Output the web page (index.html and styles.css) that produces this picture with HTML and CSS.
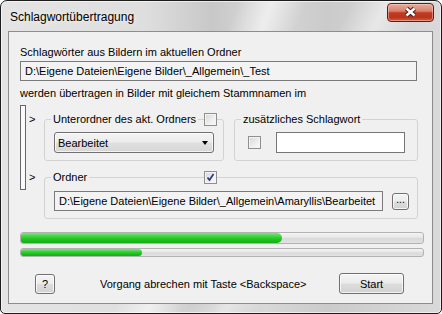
FILE: index.html
```html
<!DOCTYPE html>
<html lang="de">
<head>
<meta charset="utf-8">
<title>Schlagwortübertragung</title>
<link rel="stylesheet" href="styles.css">
</head>
<body>
<div class="window">
  <div class="titlebar">
    <span class="title">Schlagwortübertragung</span>
    <div class="close">
      <svg width="47" height="19" viewBox="0 0 47 19">
        <path d="M19.5 5.5 L27.5 12.5 M27.5 5.5 L19.5 12.5" stroke="#4a2018" stroke-width="4.6" fill="none"/>
        <path d="M19.5 5.5 L27.5 12.5 M27.5 5.5 L19.5 12.5" stroke="#ffffff" stroke-width="2.4" fill="none"/>
      </svg>
    </div>
  </div>
  <div class="client">
    <div class="label">Schlagwörter aus Bildern im aktuellen Ordner</div>
    <div class="field path1">D:\Eigene Dateien\Eigene Bilder\_Allgemein\_Test</div>
    <div class="label l2">werden übertragen in Bilder mit gleichem Stammnamen im</div>
    <div class="options">
      <div class="bracket"></div>
      <div class="rows">
        <div class="row">
          <span class="arrow">&gt;</span>
          <fieldset class="group g1">
            <legend>Unterordner des akt. Ordners</legend>
            <span class="check over"></span>
            <div class="combo"><span>Bearbeitet</span><span class="caret"></span></div>
          </fieldset>
          <fieldset class="group g2">
            <legend>zusätzliches Schlagwort</legend>
            <div class="g2row">
              <span class="check"></span>
              <div class="input"></div>
            </div>
          </fieldset>
        </div>
        <div class="row r2">
          <span class="arrow">&gt;</span>
          <fieldset class="group g3">
            <legend>Ordner</legend>
            <span class="check over checked">
              <svg width="11" height="11" viewBox="0 0 11 11"><path d="M2.5 5.5 L4.5 8 L8.5 2" stroke="#283c86" stroke-width="1.7" fill="none"/></svg>
            </span>
            <div class="g3row">
              <div class="field path2">D:\Eigene Dateien\Eigene Bilder\_Allgemein\Amaryllis\Bearbeitet</div>
              <div class="btn dots">...</div>
            </div>
          </fieldset>
        </div>
      </div>
    </div>
    <div class="progress p1"><div class="fill" style="width:65%"></div></div>
    <div class="progress p2"><div class="fill" style="width:30%"></div></div>
    <div class="bottom">
      <div class="btn help">?</div>
      <span class="hint">Vorgang abrechen mit Taste &lt;Backspace&gt;</span>
      <div class="btn start">Start</div>
    </div>
  </div>
</div>
</body>
</html>
```

FILE: styles.css
```css
* { box-sizing: border-box; }
html, body { margin: 0; padding: 0; }
body {
  width: 442px;
  height: 314px;
  overflow: hidden;
  background: #ffffff;
  font-family: "Liberation Sans", Arial, sans-serif;
  font-size: 11px;
  color: #000;
}
.window {
  width: 442px;
  height: 314px;
  border: 1px solid #1c1c1c;
  border-radius: 7px 7px 5px 5px;
  display: flex;
  flex-direction: column;
  box-shadow: inset 0 0 0 1px rgba(255,255,255,0.6);
  background:
    linear-gradient(112deg, transparent 42%, rgba(255,255,255,0.55) 48%, transparent 54%),
    linear-gradient(118deg, transparent 58%, rgba(255,255,255,0.5) 64%, transparent 70%),
    linear-gradient(to right, #e4e4e4 0%, #dedede 33%, #c8c8c8 48%, #d8d8d8 60%, #cbcbcb 74%, #d9d9d9 100%);
}
.titlebar {
  height: 30px;
  flex: none;
  display: flex;
  align-items: flex-start;
}
.title {
  font-size: 12px;
  line-height: 14px;
  margin: 9px 0 0 9px;
  color: #000;
  text-shadow: 0 0 6px rgba(255,255,255,0.9);
}
.close {
  margin: 2px 7px 0 auto;
  width: 47px;
  height: 19px;
  border: 1px solid #5c1d12;
  border-radius: 4px;
  background: linear-gradient(#e9ac9d 0%, #da806c 42%, #c23b22 52%, #bb331a 78%, #cf5e47 100%);
  box-shadow: inset 0 0 0 1px rgba(255,220,210,0.45);
  display: flex;
}
.close svg { display: block; margin: -1px; }
.client {
  flex: 1;
  margin: 0 8px 9px 7px;
  border: 1px solid #8d8d8d;
  background: #f0f0f0;
  padding: 14px 8px 0 11px;
  display: flex;
  flex-direction: column;
}
.label { line-height: 13px; height: 13px; white-space: nowrap; }
.l2 { margin-top: 6px; }
.field {
  border: 1px solid #7a7a7a;
  background: #f3f3f3;
  height: 20px;
  line-height: 18px;
  padding-left: 4px;
  white-space: nowrap;
}
.path1 { width: 397px; margin-top: 2px; }
.options { display: flex; margin-top: 5px; }
.bracket {
  width: 6px;
  height: 85px;
  border: 1px solid #676767;
  background: #fafafa;
}
.rows { margin: 8px 0 0 3px; display: flex; flex-direction: column; }
.row { display: flex; align-items: stretch; }
.r2 { margin-top: 10px; }
.arrow { width: 15px; line-height: 13px; height: 13px; }
.group {
  position: relative;
  margin: 0;
  padding: 0 8px 7px 6px;
  border: 1px solid #d3d3d3;
  border-radius: 3px;
  min-width: 0;
}
.group legend {
  padding: 0 2px;
  line-height: 13px;
  height: 13px;
  white-space: nowrap;
}
.g1 { width: 180px; }
.g2 { width: 184px; margin-left: 10px; }
.g3 { width: 374px; }
.check {
  display: block;
  width: 13px;
  height: 13px;
  border: 1px solid #8f8f8f;
  background: linear-gradient(135deg, #d6d6d6 0%, #efefef 60%, #fbfbfb 100%);
  box-shadow: inset 0 0 0 1px #f4f4f4;
  flex: none;
}
.check svg { display: block; margin: 0; }
.over { position: absolute; top: -13px; left: 159px; }
.combo {
  margin: 6px 0 0 3px;
  width: 160px;
  height: 21px;
  border: 1px solid #707070;
  border-radius: 3px;
  background: linear-gradient(#f4f4f4 0%, #ececec 48%, #e0e0e0 52%, #d6d6d6 100%);
  box-shadow: inset 0 0 0 1px rgba(255,255,255,0.7);
  display: flex;
  align-items: center;
  justify-content: space-between;
  padding: 0 5px 0 3px;
}
.caret {
  width: 0;
  height: 0;
  border-top: 4px solid #000;
  border-left: 3.5px solid transparent;
  border-right: 3.5px solid transparent;
}
.g2row { display: flex; align-items: center; margin: 6px 0 0 7px; height: 21px; }
.input {
  margin-left: 15px;
  width: 129px;
  height: 21px;
  border: 1px solid #767676;
  background: #ffffff;
}
.g3row { display: flex; align-items: center; margin: 7px 0 0 3px; }
.path2 { width: 329px; }
.btn {
  border: 1px solid #707070;
  border-radius: 3px;
  background: linear-gradient(#f4f4f4 0%, #ececec 48%, #dddddd 52%, #d2d2d2 100%);
  box-shadow: inset 0 0 0 1px rgba(255,255,255,0.75);
  display: flex;
  align-items: center;
  justify-content: center;
  flex: none;
}
.dots { width: 17px; height: 17px; margin-left: 9px; line-height: 10px; align-items: flex-end; padding-bottom: 4px; font-size: 10px; }
.progress {
  width: 404px;
  border: 1px solid #b2b2b2;
  border-radius: 3px;
  background: linear-gradient(#f5f5f5 0%, #e6e6e6 45%, #d9d9d9 55%, #e2e2e2 100%);
  overflow: hidden;
}
.p1 { height: 12px; margin-top: 13px; }
.p2 { height: 9px; margin-top: 4px; }
.fill {
  height: 100%;
  background: linear-gradient(#7ee27e 0%, #3fd43f 35%, #22c422 60%, #12b012 100%);
  border-radius: 2px 6px 6px 2px;
}
.bottom { display: flex; align-items: center; margin-top: 16px; height: 21px; }
.help { width: 20px; height: 20px; margin-left: 15px; }
.hint { margin-left: 45px; white-space: nowrap; }
.start { width: 65px; height: 21px; margin-left: auto; margin-right: 20px; }
```
